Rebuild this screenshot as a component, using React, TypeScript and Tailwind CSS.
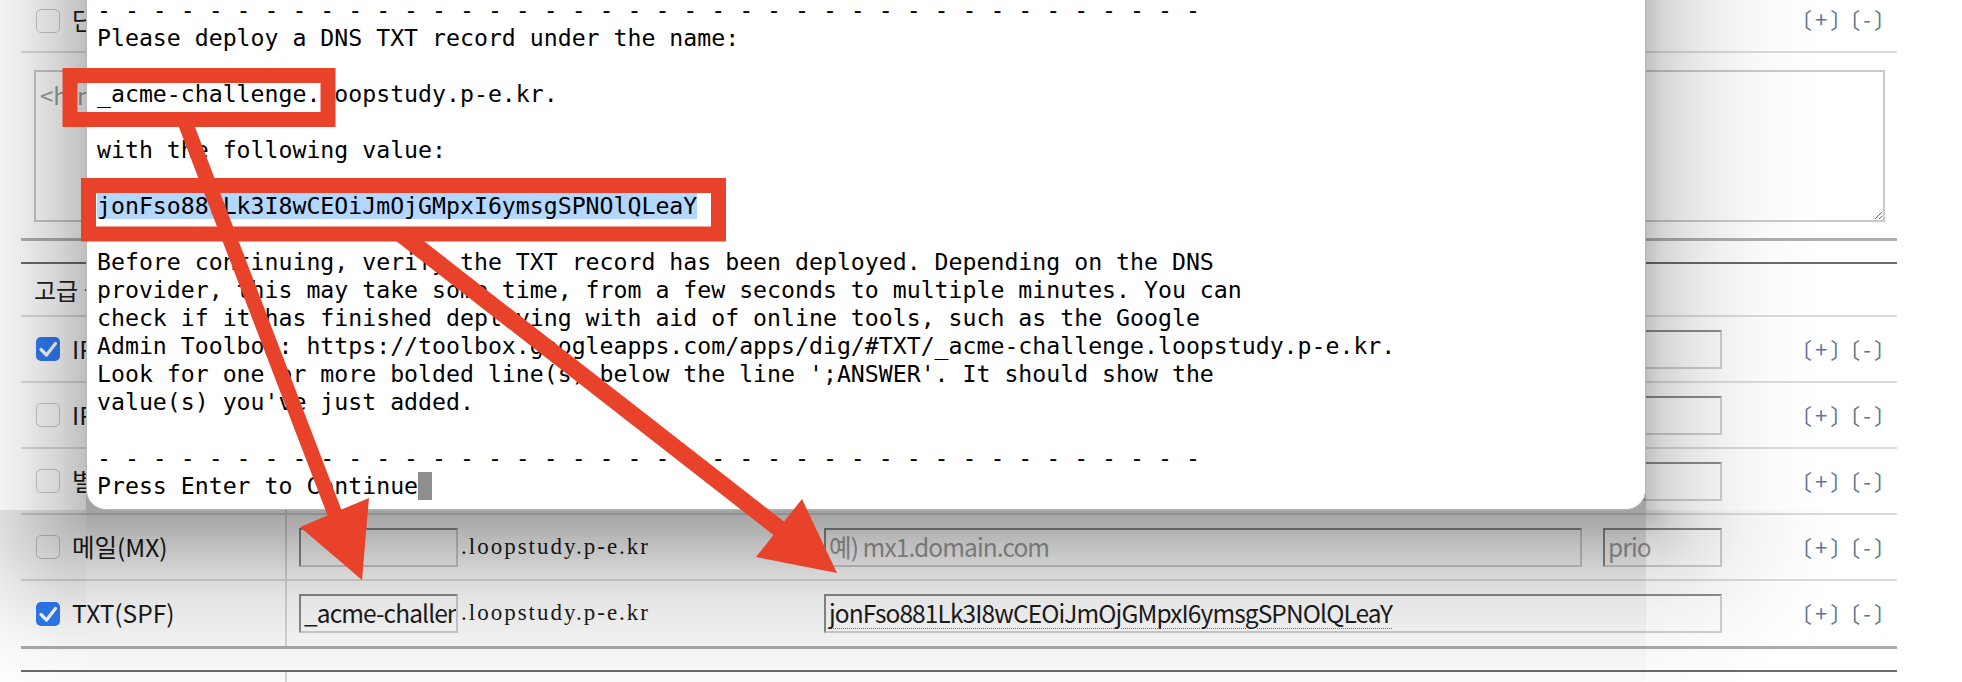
import React from "react";

const kr = "font-['Noto_Sans_CJK_KR','Noto_Sans',sans-serif]";

function Checkbox({ checked }: { checked?: boolean }) {
  if (checked) {
    return (
      <span className="flex h-6 w-6 shrink-0 items-center justify-center rounded-[5px] bg-[#2f7cf6]">
        <svg viewBox="0 0 24 24" className="h-6 w-6">
          <path d="M5 12.5l5.5 5.5L19.5 6.5" fill="none" stroke="#fff" strokeWidth="3.2" strokeLinecap="round" strokeLinejoin="round" />
        </svg>
      </span>
    );
  }
  return <span className="h-6 w-6 shrink-0 rounded-[5px] border border-[#c9c9c9] bg-white" />;
}

function Bracket({ sign }: { sign: string }) {
  return (
    <span className="inline-flex items-center text-[22px] leading-none text-[#5c7793]">
      <span className="-ml-[13px] mr-[3px]">〔</span>
      <span>{sign}</span>
      <span className="ml-[3px] -mr-[13px]">〕</span>
    </span>
  );
}

function Actions() {
  return (
    <div className={`flex flex-1 items-center gap-[12px] pl-[81px] pb-[3px] ${kr}`}>
      <Bracket sign="+" />
      <Bracket sign="-" />
    </div>
  );
}

const field =
  "flex h-[39px] items-center overflow-hidden whitespace-nowrap border-2 border-t-[#8d8d8d] border-l-[#8d8d8d] border-r-[#d0d0d0] border-b-[#d0d0d0] bg-white px-[3px] text-[24.5px] tracking-[-0.9px] leading-none text-[#1c1c1c]";

type Row = {
  label: string;
  checked?: boolean;
  sub?: string;
  value?: string;
  placeholder?: string;
  mx?: boolean;
};

const rows: Row[] = [
  { label: "IPv4(A)", checked: true, sub: "", value: "" },
  { label: "IPv6(AAAA)", sub: "", value: "" },
  { label: "별칭(CNAME)", sub: "", value: "" },
  { label: "메일(MX)", sub: "", placeholder: "예) mx1.domain.com", mx: true },
  { label: "TXT(SPF)", checked: true, sub: "_acme-challenge", value: "jonFso881Lk3I8wCEOiJmOjGMpxI6ymsgSPNOlQLeaY" },
];

function RecordRow({ row, last }: { row: Row; last?: boolean }) {
  return (
    <div
      className={
        last
          ? `flex h-[68px] border-b-[3px] border-[#acacac] ${kr}`
          : `flex h-[66px] border-b-2 border-[#dcdcdc] ${kr}`
      }
    >
      <div className="flex w-[266px] shrink-0 items-center gap-3 border-r-2 border-[#d9d9d9] pl-[15px]">
        <Checkbox checked={row.checked} />
        <span className="text-[24.5px] leading-none text-[#1a1a1a]">{row.label}</span>
      </div>
      <div className="flex w-[537px] shrink-0 items-center pl-[12px]">
        <div className={`${field} w-[159px]`}>{row.sub}</div>
        <span className="ml-[3px] font-['Liberation_Serif',serif] text-[23px] tracking-[2px] text-[#1a1a1a]">
          .loopstudy.p-e.kr
        </span>
      </div>
      <div className="flex w-[898px] shrink-0 items-center gap-[21px]">
        {row.mx ? (
          <>
            <div className={`${field} w-[758px] text-[#9d9d9d]`}>{row.placeholder}</div>
            <div className={`${field} w-[119px] text-[#9d9d9d]`}>prio</div>
          </>
        ) : (
          <div className={`${field} w-[898px]`}>
            <span className="underline decoration-[#e05050] decoration-dotted decoration-1 underline-offset-[5px]">
              {row.value}
            </span>
          </div>
        )}
      </div>
      <Actions />
    </div>
  );
}

const dashes = "- ".repeat(39) + "-";

const lines = [
  dashes,
  "Please deploy a DNS TXT record under the name:",
  "",
  "_acme-challenge.loopstudy.p-e.kr.",
  "",
  "with the following value:",
  "",
  "@value",
  "",
  "Before continuing, verify the TXT record has been deployed. Depending on the DNS",
  "provider, this may take some time, from a few seconds to multiple minutes. You can",
  "check if it has finished deploying with aid of online tools, such as the Google",
  "Admin Toolbox: https://toolbox.googleapps.com/apps/dig/#TXT/_acme-challenge.loopstudy.p-e.kr.",
  "Look for one or more bolded line(s) below the line ';ANSWER'. It should show the",
  "value(s) you've just added.",
  "",
  dashes,
  "@prompt",
];

// window shadow, drawn as gradient pieces around the terminal
function WindowShadow() {
  return (
    <>
      <div className="absolute left-0 top-0 z-[9] h-[510px] w-[86px] [background-image:linear-gradient(to_right,rgba(0,0,0,0.05),rgba(0,0,0,0.08)_21px,rgba(0,0,0,0.12)_40px,rgba(0,0,0,0.17)_60px,rgba(0,0,0,0.25))]" />
      <div className="absolute left-[1646px] top-0 z-[9] h-[510px] w-[204px] [background-image:linear-gradient(to_right,rgba(0,0,0,0.25),rgba(0,0,0,0.17)_14px,rgba(0,0,0,0.1)_44px,rgba(0,0,0,0.06)_74px,rgba(0,0,0,0.025)_114px,rgba(0,0,0,0)_174px)]" />
      <div className="absolute left-[86px] top-[490px] z-[9] h-[192px] w-[1560px] [background-image:linear-gradient(to_bottom,rgba(0,0,0,0.36)_20px,rgba(0,0,0,0.3)_40px,rgba(0,0,0,0.25)_55px,rgba(0,0,0,0.15)_88px,rgba(0,0,0,0.1)_110px,rgba(0,0,0,0.05)_156px,rgba(0,0,0,0.02))]" />
      <div className="absolute left-0 top-[510px] z-[9] h-[172px] w-[86px] [background-image:radial-gradient(circle_at_100%_0%,rgba(0,0,0,0.32),rgba(0,0,0,0.2)_55px,rgba(0,0,0,0.1)_100px,rgba(0,0,0,0.03)_150px,rgba(0,0,0,0)_200px)]" />
      <div className="absolute left-[1646px] top-[510px] z-[9] h-[172px] w-[204px] [background-image:radial-gradient(circle_at_0%_0%,rgba(0,0,0,0.3),rgba(0,0,0,0.17)_30px,rgba(0,0,0,0.1)_60px,rgba(0,0,0,0.05)_100px,rgba(0,0,0,0.02)_150px,rgba(0,0,0,0)_200px)]" />
    </>
  );
}

function Terminal() {
  return (
    <div className="absolute left-[86px] top-[-40px] z-10 h-[550px] w-[1560px] rounded-[20px] border border-[#b8b8b8] bg-white pl-[10px] pt-[35px]">
      <div className="font-['DejaVu_Sans_Mono',monospace] text-[23.2px] leading-[28px] text-black">
        {lines.map((l, i) => (
          <div key={i} className="h-[28px] whitespace-pre">
            {l === "@value" ? (
              <span className="bg-[#b3d7ff]">jonFso881Lk3I8wCEOiJmOjGMpxI6ymsgSPNOlQLeaY</span>
            ) : l === "@prompt" ? (
              <>
                Press Enter to Continue
                <span className="inline-block h-[28px] w-[14px] bg-[#8e8e8e] align-top" />
              </>
            ) : (
              l
            )}
          </div>
        ))}
      </div>
    </div>
  );
}

function Annotations() {
  const red = "#e9422a";
  return (
    <svg className="pointer-events-none absolute left-0 top-0 z-20" width="1962" height="682" viewBox="0 0 1962 682">
      <rect x="70" y="75.5" width="258" height="44" fill="none" stroke={red} strokeWidth="15" />
      <rect x="88.5" y="185.5" width="630" height="48.5" fill="none" stroke={red} strokeWidth="15" />
      <line x1="185" y1="122" x2="335" y2="514" stroke={red} strokeWidth="15" />
      <polygon points="300,527 369,498 362,580" fill={red} />
      <line x1="401" y1="234" x2="781" y2="530" stroke={red} strokeWidth="17" />
      <polygon points="802,499 756,557 837,573" fill={red} />
    </svg>
  );
}

export default function App() {
  return (
    <div className="relative h-[682px] w-[1962px] overflow-hidden bg-white">
      <div className="ml-[21px] w-[1876px]">
        {/* top table */}
        <div className="-mt-[12px] border-b-[3px] border-[#b0b0b0]">
          <div className={`flex h-[65px] border-b-2 border-[#dcdcdc] ${kr}`}>
            <div className="flex w-[266px] shrink-0 items-center gap-3 border-r-2 border-[#d9d9d9] pl-[15px] pt-[2px]">
              <Checkbox />
              <span className="text-[24.5px] leading-none text-[#1a1a1a]">단일 레코드</span>
            </div>
            <div className="w-[1435px] shrink-0" />
            <Actions />
          </div>
          <div className="px-[12px] pb-[16px] pl-[13px] pt-[17px]">
            <textarea
              readOnly
              placeholder="<html>"
              className={`block h-[152px] w-full resize-y border-2 border-[#cacaca] bg-white px-[4px] py-[8px] text-[24px] leading-[30px] placeholder:text-[#9c9c9c] ${kr}`}
            />
          </div>
        </div>

        {/* records table */}
        <div className="mt-[21px] border-t-2 border-[#6b6b6b]">
          <div className={`flex h-[53px] items-center border-b-2 border-[#dcdcdc] pl-[13px] text-[24px] text-[#222] ${kr}`}>
            고급 설정
          </div>
          {rows.map((r, i) => (
            <RecordRow key={r.label} row={r} last={i === rows.length - 1} />
          ))}
        </div>

        {/* next table */}
        <div className="mt-[21px] flex h-[40px] border-t-2 border-[#6b6b6b]">
          <div className="w-[266px] border-r-2 border-[#d9d9d9]" />
        </div>
      </div>

      <WindowShadow />
      <Terminal />
      <Annotations />
    </div>
  );
}
